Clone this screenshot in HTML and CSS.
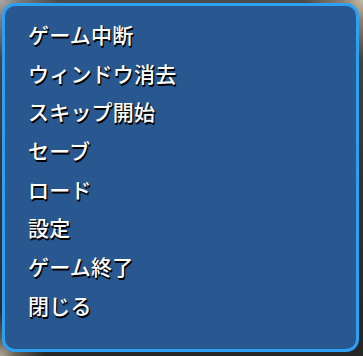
FILE: index.html
```html
<!DOCTYPE html>
<html lang="ja">
<head>
<meta charset="utf-8">
<link rel="stylesheet" href="styles.css">
</head>
<body>
<div class="scene">
  <div class="menu">
    <div class="item">ゲーム中断</div>
    <div class="item">ウィンドウ消去</div>
    <div class="item">スキップ開始</div>
    <div class="item">セーブ</div>
    <div class="item">ロード</div>
    <div class="item">設定</div>
    <div class="item">ゲーム終了</div>
    <div class="item">閉じる</div>
  </div>
</div>
</body>
</html>
```
FILE: styles.css
```css
html, body {
  margin: 0;
  padding: 0;
}
body {
  width: 363px;
  height: 356px;
  overflow: hidden;
  background: #2b2b2b;
}
.scene {
  width: 363px;
  height: 356px;
  box-sizing: border-box;
  padding: 3px 4px 4px 2px;
  background:
    radial-gradient(circle at 0 0, #a8a8a8 0, #7a7a7a 20px, transparent 60px),
    radial-gradient(circle at 100% 0, #c9bba4 0, #8c8170 20px, transparent 60px),
    radial-gradient(circle at 0 100%, #b0a999 0, #6a6458 15px, transparent 45px),
    linear-gradient(180deg, #4a4a4a 0%, #333 50%, #262626 100%);
}
.menu {
  height: 349px;
  box-sizing: border-box;
  border: 3px solid #2ea0f4;
  border-radius: 13px;
  background: #28588f;
  padding: 9px 0 0 23px;
  display: flex;
  flex-direction: column;
}
.item {
  height: 38.7px;
  line-height: 38.7px;
  font-family: "Noto Sans CJK JP", "Noto Sans", sans-serif;
  font-size: 21px;
  font-weight: 500;
  color: #ffffff;
  text-shadow: 1px 2px 0 #000, 1px 1px 1px #000;
  letter-spacing: 0.2px;
}
```
